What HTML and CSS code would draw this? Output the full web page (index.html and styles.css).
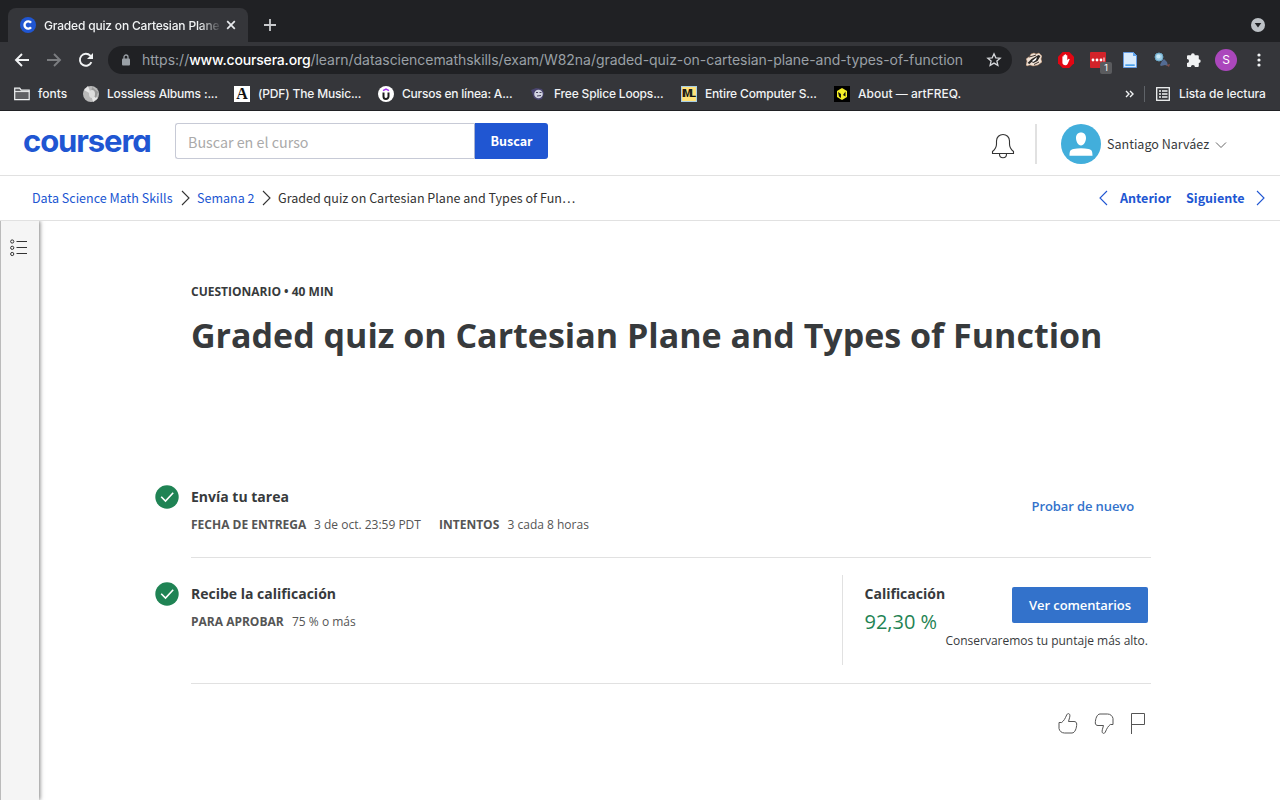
FILE: index.html
```html
<!DOCTYPE html>
<html lang="es">
<head>
<meta charset="utf-8">
<title>Graded quiz on Cartesian Plane and Types of Function | Coursera</title>
<link rel="stylesheet" href="styles.css">
</head>
<body>
<div class="browser">
  <div class="tabs">
    <div class="tab">
      <svg class="fav" width="16" height="16" viewBox="0 0 16 16"><circle cx="8" cy="8" r="8" fill="#2056d2"/><path d="M11 5.8a3.6 3.6 0 1 0 0 4.4" fill="none" stroke="#fff" stroke-width="2.4"/></svg>
      <span class="tab-title">Graded quiz on Cartesian Plane</span>
      <svg class="tab-close" width="10" height="10" viewBox="0 0 10 10"><path d="M1.2 1.2l7.6 7.6M8.8 1.2L1.2 8.8" stroke="#e8eaed" stroke-width="1.7"/></svg>
    </div>
    <svg class="new-tab" width="12" height="12" viewBox="0 0 12 12"><path d="M6 0v12M0 6h12" stroke="#c8cacd" stroke-width="1.8"/></svg>
    <svg class="tab-menu" width="14" height="14" viewBox="0 0 14 14"><circle cx="7" cy="7" r="7" fill="#bdc1c6"/><path d="M3.7 5h6.6L7 9.4z" fill="#202124"/></svg>
  </div>
  <div class="toolbar">
    <svg class="nav-back" width="16" height="14" viewBox="0 0 16 14"><path d="M15 7H2M8 1L2 7l6 6" fill="none" stroke="#f1f3f4" stroke-width="1.9"/></svg>
    <svg class="nav-fwd" width="16" height="14" viewBox="0 0 16 14"><path d="M1 7h13M8 1l6 6-6 6" fill="none" stroke="#7b7d80" stroke-width="1.9"/></svg>
    <svg class="nav-reload" width="16" height="16" viewBox="0 0 16 16"><path d="M13.4 10.2A6 6 0 1 1 12.3 3.7L14 5.4" fill="none" stroke="#f1f3f4" stroke-width="1.9"/><path d="M15 1v6H9z" fill="#f1f3f4"/></svg>
    <div class="address">
      <svg class="lock" width="8" height="12" viewBox="0 0 8 12"><path d="M2 5V3a2 2 0 0 1 4 0v2" fill="none" stroke="#9aa0a6" stroke-width="1.3"/><rect y="4.4" width="8" height="7" rx="1" fill="#9aa0a6"/></svg>
      <span class="url"><span class="u1">https://</span><b class="u2">www.coursera.org</b><span class="u3">/learn/datasciencemathskills/exam/W82na/graded-quiz-on-cartesian-plane-and-types-of-function</span></span>
      <svg class="star" width="16" height="16" viewBox="0 0 16 16"><path d="M8 1.8l1.8 4 4.4.4-3.3 2.9 1 4.3L8 11.1l-3.9 2.3 1-4.3-3.3-2.9 4.4-.4z" fill="none" stroke="#d5d7da" stroke-width="1.3"/></svg>
    </div>
    <div class="exts">
      <svg width="16" height="16" viewBox="0 0 16 16"><path d="M0 13l1-4-1-2 4-3 1-2 3-1 2 1 3-1 3 3-1 3 1 3-4 3-5 1-3-1-3 1z" fill="#f0e2d6" stroke="#b98661" stroke-width=".5"/><path d="M1.500 11l4-4 7-4 2 1-3 5-4 2-2-1-2 2z" fill="#2a2624"/><path d="M6 9l5-4-1 3-3 2z" fill="#fff"/><path d="M3 5l4-1 3-1M8 12.500l5-2.500" fill="none" stroke="#42352d"/></svg>
      <svg width="16" height="16" viewBox="0 0 16 16"><path d="M4.7 0h6.6L16 4.7v6.6L11.3 16H4.7L0 11.3V4.7z" fill="#e20613"/><path d="M4.400 7.800V4.600q.7-.7 1.200 0V3.200q.6-.7 1.200 0V2.600q.6-.7 1.300 0v.8q.7-.6 1.200 0v4.800l1-1.200q.9-.6 1.400.2l-2 4.600c-1.400 2.600-5.300 1.600-5.300-1.200z" fill="#fff"/></svg>
      <div class="lastpass"><svg width="16" height="16" viewBox="0 0 16 16"><rect width="16" height="16" rx="1" fill="#d2232a"/><g fill="#fff"><circle cx="3" cy="8" r="1.4"/><circle cx="7" cy="8" r="1.4"/><circle cx="11" cy="8" r="1.4"/><path d="M13.5 5.5h1v4h-1z"/></g></svg><span class="badge">1</span></div>
      <svg class="doc" width="14" height="16" viewBox="0 0 14 16"><path d="M.5.5h10l3 3v12H.5z" fill="#d9ebfc" stroke="#639be2"/><path d="M10 0v4h4" fill="#5fa4ed"/><path d="M2.300 12.300h9.400v1.700H2.300z" fill="#4aa1eb"/></svg>
      <svg width="16" height="16" viewBox="0 0 16 16"><circle cx="5" cy="5" r="4" fill="#9acbe4" stroke="#6ba8c8"/><circle cx="4.5" cy="4.5" r="2" fill="#c8e8f5"/><path d="M8 9l2-2 3 3 1 4-3-1-4 1-1-1z" fill="#536b93"/><path d="M12 13l4-1-1 3z" fill="#7d4e48"/></svg>
      <svg width="16" height="16" viewBox="0 0 16 16"><path d="M1 4.2a1 1 0 0 1 1-1h3a1.9 1.9 0 1 1 3.8 0h3a1 1 0 0 1 1 1v3a1.9 1.9 0 1 1 0 3.8v3a1 1 0 0 1-1 1H8.9a2 2 0 0 0-4 0H2a1 1 0 0 1-1-1v-3a2 2 0 0 0 0-4z" fill="#f1f3f4"/></svg>
    </div>
    <span class="profile">S</span>
    <svg class="kebab" width="4" height="14" viewBox="0 0 4 14"><circle cx="2" cy="2" r="1.6" fill="#f1f3f4"/><circle cx="2" cy="7" r="1.6" fill="#f1f3f4"/><circle cx="2" cy="12" r="1.6" fill="#f1f3f4"/></svg>
  </div>
  <div class="bookmarks">
    <span class="bm bm1"><svg width="16" height="14" viewBox="0 0 16 14"><path d="M.7 12.7V1.2h5l1.5 2h8v9.5z" fill="#606164" stroke="#f1f3f4" stroke-width="1.2"/><path d="M.7 4.6h14.6" stroke="#f1f3f4"/></svg><span>fonts</span></span>
    <span class="bm bm2"><svg width="16" height="16" viewBox="0 0 16 16"><circle cx="8" cy="8" r="8" fill="#b9b9b9"/><path d="M1 4l7 4L5 0zM15 12L8 8l2 8z" fill="#e6e6e6"/><path d="M9 1l6 5-2 6-5-4z" fill="#999"/><ellipse cx="9" cy="8" rx="3" ry="4" fill="#ddd"/></svg><span>Lossless Albums :...</span></span>
    <span class="bm bm3"><span class="a-logo">A</span><span>(PDF) The Music...</span></span>
    <span class="bm bm4"><svg width="16" height="16" viewBox="0 0 16 16"><circle cx="8" cy="8" r="8" fill="#fff"/><path d="M5.500 6.500v4a2.500 2.500 0 0 0 5 0v-4" fill="none" stroke="#1c1d1f" stroke-width="2"/><path d="M5 4.700L8 3l3 1.700" fill="none" stroke="#a435f0" stroke-width="1.500"/></svg><span>Cursos en línea: A...</span></span>
    <span class="bm bm5"><svg width="16" height="16" viewBox="0 0 16 16"><path d="M1 4l5-2 6 1 2 4-2 6-4 1-4-2z" fill="#49446f"/><circle cx="8.500" cy="8" r="4.300" fill="#d3d5e2"/><path d="M6 6.500h2M9.500 6.500h2M7 10l4-.5" stroke="#48425e"/></svg><span>Free Splice Loops...</span></span>
    <span class="bm bm6"><span class="iml">IML</span><span>Entire Computer S...</span></span>
    <span class="bm bm7"><svg width="16" height="16" viewBox="0 0 16 16"><path d="M0 0h16v16H0z" fill="#000"/><path d="M8 2l5 3v6l-5 3-5-3V5z" fill="#f4ee27"/><path d="M4 6l3 2v4L5 10.500zM11.500 5.500v5L9 9z" fill="#111"/></svg><span class="art">About — artFREQ.</span></span>
    <svg class="more" width="9" height="8" viewBox="0 0 9 8"><path d="M1 1l3 3-3 3M5 1l3 3-3 3" fill="none" stroke="#f1f3f4" stroke-width="1.4"/></svg>
    <span class="bm-sep"></span>
    <svg class="list-ico" width="14" height="14" viewBox="0 0 14 14"><rect x=".7" y=".7" width="12.6" height="12.6" fill="none" stroke="#f1f3f4" stroke-width="1.3"/><path d="M3 4h2M3 7h2M3 10h2M6 4h5.500M6 7h5.500M6 10h5.500" stroke="#f1f3f4" stroke-width="1.4"/></svg>
    <span class="reading">Lista de lectura</span>
  </div>
</div>
<header class="site">
  <span class="logo">coursera</span>
  <div class="search"><span class="placeholder">Buscar en el curso</span><span class="search-btn">Buscar</span></div>
  <svg class="bell" width="24" height="26" viewBox="0 0 24 26"><path d="M1.500 20.500v-2c2.500-2 4-4.500 4-7.500V8c0-4 3-6.500 6.500-6.500S18.500 4 18.500 8v3c0 3 1.500 5.500 4 7.500v2zM8.500 21c0 5 7 5 7 0" fill="none" stroke="#333" stroke-width="1.100"/></svg>
  <span class="divider"></span>
  <svg class="avatar" width="40" height="40" viewBox="0 0 40 40"><circle cx="20" cy="20" r="20" fill="#42aedb"/><path d="M20 8.500c3 0 5 2.200 5 5.500s-2 7.500-5 7.500-5-4.200-5-7.500 2-5.500 5-5.500zM8.500 31.700c0-5 1-6 4-6.700 4.500-1 10.500-1 15 0 3 .7 4 1.700 4 6.700z" fill="#fff"/></svg>
  <span class="user">Santiago Narváez</span>
  <svg class="user-arrow" width="12" height="8" viewBox="0 0 12 8"><path d="M1 1.500l5 5 5-5" fill="none" stroke="#666"/></svg>
</header>
<nav class="crumbs">
  <a class="c1">Data Science Math Skills</a>
  <svg class="chev" width="9" height="16" viewBox="0 0 9 16"><path d="M1 1l7 7-7 7" fill="none" stroke="#333" stroke-width="1.100"/></svg>
  <a class="c2">Semana 2</a>
  <svg class="chev" width="9" height="16" viewBox="0 0 9 16"><path d="M1 1l7 7-7 7" fill="none" stroke="#333" stroke-width="1.100"/></svg>
  <span class="c3">Graded quiz on Cartesian Plane and Types of Fun…</span>
  <svg class="prev-ico" width="9" height="16" viewBox="0 0 9 16"><path d="M8 1L1 8l7 7" fill="none" stroke="#2056d2" stroke-width="1.100"/></svg>
  <b class="prev">Anterior</b>
  <b class="next">Siguiente</b>
  <svg class="next-ico" width="9" height="16" viewBox="0 0 9 16"><path d="M1 1l7 7-7 7" fill="none" stroke="#2056d2" stroke-width="1.100"/></svg>
</nav>
<div class="body">
  <aside class="side">
    <svg width="18" height="18" viewBox="0 0 18 18"><g fill="none" stroke="#333"><circle cx="2.200" cy="2.500" r="1.600"/><circle cx="2.200" cy="8.800" r="1.600"/><circle cx="2.200" cy="15" r="1.600"/><path d="M6.500 2.500H17M6.500 8.500H17M6.500 14.500H17"/></g></svg>
  </aside>
  <main class="main">
    <div class="kind">CUESTIONARIO • 40 MIN</div>
    <h1>Graded quiz on Cartesian Plane and Types of Function</h1>
    <section class="row row1">
      <svg class="check" width="24" height="24" viewBox="0 0 24 24"><circle cx="12" cy="12" r="11.700" fill="#1f8354"/><path d="M6.200 11.800l4.300 4.300 7.700-8.400" fill="none" stroke="#fff" stroke-width="1.600"/></svg>
      <div class="info">
        <h2 class="t1">Envía tu tarea</h2>
        <p><b class="k1">FECHA DE ENTREGA</b><span class="v1">3 de oct. 23:59 PDT</span><b class="k2">INTENTOS</b><span class="v2">3 cada 8 horas</span></p>
      </div>
      <a class="retry">Probar de nuevo</a>
    </section>
    <section class="row row2">
      <svg class="check" width="24" height="24" viewBox="0 0 24 24"><circle cx="12" cy="12" r="11.700" fill="#1f8354"/><path d="M6.200 11.800l4.300 4.300 7.700-8.400" fill="none" stroke="#fff" stroke-width="1.600"/></svg>
      <div class="info">
        <h2 class="t2">Recibe la calificación</h2>
        <p><b class="k3">PARA APROBAR</b><span class="v3">75 % o más</span></p>
      </div>
      <div class="grade">
        <div class="score"><h2 class="t3">Calificación</h2><div class="pct">92,30 %</div></div>
        <div class="feedback"><span class="btn">Ver comentarios</span><span class="note">Conservaremos tu puntaje más alto.</span></div>
      </div>
    </section>
    <div class="react">
      <svg width="20" height="21" viewBox="0 0 20 21"><path id="thumb" d="M1 9.500h2.700c2.300-1.800 3.500-4.200 4.500-6.500C9 1 9.700.5 10.500.600c1.300.2 1.700 1.600 1.200 3.600L10.500 8.500h5.500c1.700 0 2.700 1 2.700 2.500 0 4-1.700 9-4.700 9H6.500c-3 0-5-2-5.500-4.500z" fill="none" stroke="#555"/></svg>
      <svg width="20" height="21" viewBox="0 0 20 21"><use href="#thumb" transform="rotate(180 10 10.500)"/></svg>
      <svg width="16" height="21" viewBox="0 0 16 21"><path d="M1.500 21V.5h13v11h-13" fill="none" stroke="#555"/></svg>
    </div>
  </main>
</div>
</body>
</html>
```
FILE: styles.css
```css
* { box-sizing: border-box; }
body { margin: 0; width: 1280px; height: 800px; overflow: hidden; background: #fff; font-family: "Open Sans", sans-serif; color: #373a3c; }
svg { flex: none; display: block; }
h1, h2, p { margin: 0; }
span, b, a { white-space: nowrap; }

.browser { height: 111px; background: #35363a; border-bottom: 1px solid #202124; font-family: Inter, sans-serif; color: #f1f3f4; }
.tabs { height: 42px; background: #202124; display: flex; align-items: center; padding: 8px 15px 0 8px; }
.tab { width: 240px; height: 34px; background: #35363a; border-radius: 8px 8px 0 0; display: flex; align-items: center; padding: 0 12px; }
.tab-title { width: 177px; margin-left: 8px; font-size: 12px; font-weight: 500; letter-spacing: -.18px; -webkit-mask-image: linear-gradient(90deg, #000 155px, transparent 178px); }
.tab-close { margin-left: 7px; }
.new-tab { margin-left: 16px; }
.tab-menu { margin-left: auto; }
.toolbar { height: 36px; display: flex; align-items: center; }
.nav-back { margin-left: 14px; }
.nav-fwd { margin-left: 16px; }
.nav-reload { margin-left: 16px; }
.address { width: 904px; height: 28px; margin-left: 14px; border-radius: 14px; background: #202124; display: flex; align-items: center; padding: 0 10px 0 14px; }
.url { margin: -1px 0 0 12px; display: flex; font-size: 14px; color: #9aa0a6; }
.u2 { font-weight: 500; color: #fff; letter-spacing: -.17px; }
.u3 { letter-spacing: -.045px; }
.star { margin-left: auto; }
.exts { display: flex; align-items: center; gap: 16px; margin-left: 14px; width: 176px; }
.doc { margin: 0 1px; }
.lastpass { position: relative; flex: none; }
.badge { position: absolute; left: 10px; top: 10px; width: 12px; height: 12px; border-radius: 2px; background: #5a5b5e; font-size: 9px; line-height: 12px; text-align: center; color: #fff; }
.profile { width: 22px; height: 22px; border-radius: 50%; background: #ab47bc; margin-left: 13px; font-size: 12px; line-height: 22px; text-align: center; color: #fff; }
.kebab { margin-left: 20px; }
.bookmarks { height: 31px; display: flex; align-items: center; padding-left: 14px; font-size: 12px; font-weight: 500; letter-spacing: -.17px; }
.bm { display: flex; align-items: center; gap: 8px; flex: none; }
.bm1 { width: 69px; letter-spacing: 0; } .bm2 { width: 151px; } .bm3 { width: 144px; } .bm4 { width: 152px; letter-spacing: -.22px; } .bm5 { width: 151px; } .bm6 { width: 153px; } .bm7 { width: 291px; }
.art { letter-spacing: 0; }
.a-logo { width: 16px; height: 16px; background: #fff; color: #111; font: bold 16px/16px "Liberation Serif", serif; text-align: center; }
.iml { width: 16px; height: 16px; background: #ffe27a; border: 1px solid #a7cde4; color: #111; font: bold 10px/14px "Liberation Sans", sans-serif; letter-spacing: -1.5px; }
.bm-sep { width: 1px; height: 16px; margin: 0 11px 0 10px; background: #5f6368; }
.reading { margin-left: 9px; letter-spacing: -.06px; }

.site { height: 65px; border-bottom: 1px solid #e1e1e1; display: flex; align-items: flex-start; font-family: "Noto Sans CJK SC", sans-serif; }
.logo { width: 128px; margin: 13px 24px 0 23px; font: 700 31px/34px Inter, sans-serif; font-feature-settings: "cv11"; letter-spacing: -1.1px; color: #2056d2; }
.search { width: 373px; height: 36px; margin-top: 12px; display: flex; font-size: 14.3px; line-height: 36px; }
.placeholder { width: 300px; border: 1px solid #c7cad6; border-right-color: #a9b3d2; border-radius: 3px 0 0 3px; padding-left: 12px; line-height: 35px; color: #aaa; }
.search-btn { width: 73px; background: #2056d2; color: #fff; border-radius: 0 3px 3px 0; text-align: center; font-size: 12.54px; font-weight: 700; }
.bell { margin: 22px 0 0 443px; }
.divider { width: 2px; height: 40px; margin: 13px 24px 0 20px; background: #e1e1e1; }
.avatar { margin-top: 13px; }
.user { width: 103px; margin-left: 6px; font-size: 12.54px; line-height: 20px; margin-top: 23px; }
.user-arrow { margin: 30px 0 0 5px; }
.crumbs { height: 45px; border-bottom: 1px solid #e1e1e1; display: flex; align-items: center; padding-left: 32px; font-family: "Noto Sans CJK SC", sans-serif; font-size: 12.54px; line-height: 20px; color: #333; }
.crumbs a, .prev, .next { color: #2056d2; }
.crumbs a, .crumbs b, .crumbs span { margin-top: -1px; }
.c1 { width: 141px; } .c2 { width: 57px; } .c3 { width: 298px; }
.chev { margin: 0 7px 0 8px; }
.prev-ico { margin-left: 523px; }
.crumbs .prev { width: 51px; margin-left: 12px; }
.crumbs .next { width: 58px; margin-left: 15px; }
.next-ico { margin-left: 12px; }

.body { display: flex; height: 579px; }
.side { width: 39px; background: #f5f5f5; border-left: 1px solid #bbb; box-shadow: 1px 0 4px rgba(0,0,0,.5); padding: 18px 0 0 9px; clip-path: inset(0 -8px 0 0); }
.main { width: 960px; margin-left: 152px; padding-top: 62px; }
.kind { font-size: 12px; font-weight: 700; line-height: 18px; }
h1 { font-size: 34px; font-weight: 700; line-height: 46px; margin-top: 11px; white-space: nowrap; }
.row { display: flex; border-bottom: 1px solid #e1e1e1; }
.row1 { margin-top: 127px; height: 73px; }
.row2 { height: 126px; padding-top: 17px; }
.check { margin-left: -36px; margin-right: 12px; }
.row2 .check { margin-top: 7px; }
.info { flex: 1; }
.row2 .info { padding-top: 7px; }
h2 { font-size: 14px; font-weight: 700; line-height: 24px; white-space: nowrap; }
.info p { display: flex; margin-top: 7px; font-size: 12px; line-height: 18px; color: #555; }
.k1 { width: 123px; } .v1 { width: 125px; } .k2 { width: 68.5px; } .k3 { width: 101px; }
.retry { width: 102px; margin: 11px 17.5px 0 0; font-size: 13px; font-weight: 600; line-height: 20px; letter-spacing: -.1px; color: #3372cb; }
.grade { width: 309px; height: 90px; border-left: 1px solid #e1e1e1; padding: 7px 3px 0 21.5px; display: flex; }
.score { width: 80px; }
.pct { font-size: 20px; line-height: 28px; margin-top: 2px; color: #1f8354; }
.feedback { width: 204.5px; padding-top: 5px; display: flex; flex-direction: column; align-items: flex-end; }
.btn { width: 136px; height: 36px; background: #3372cb; border-radius: 2px; color: #fff; font-size: 13px; font-weight: 600; line-height: 36px; letter-spacing: -.1px; text-align: center; }
.note { font-size: 12px; line-height: 18px; margin-top: 9px; }
.react { display: flex; justify-content: flex-end; gap: 16px; padding: 29px 5px 0 0; }
```
